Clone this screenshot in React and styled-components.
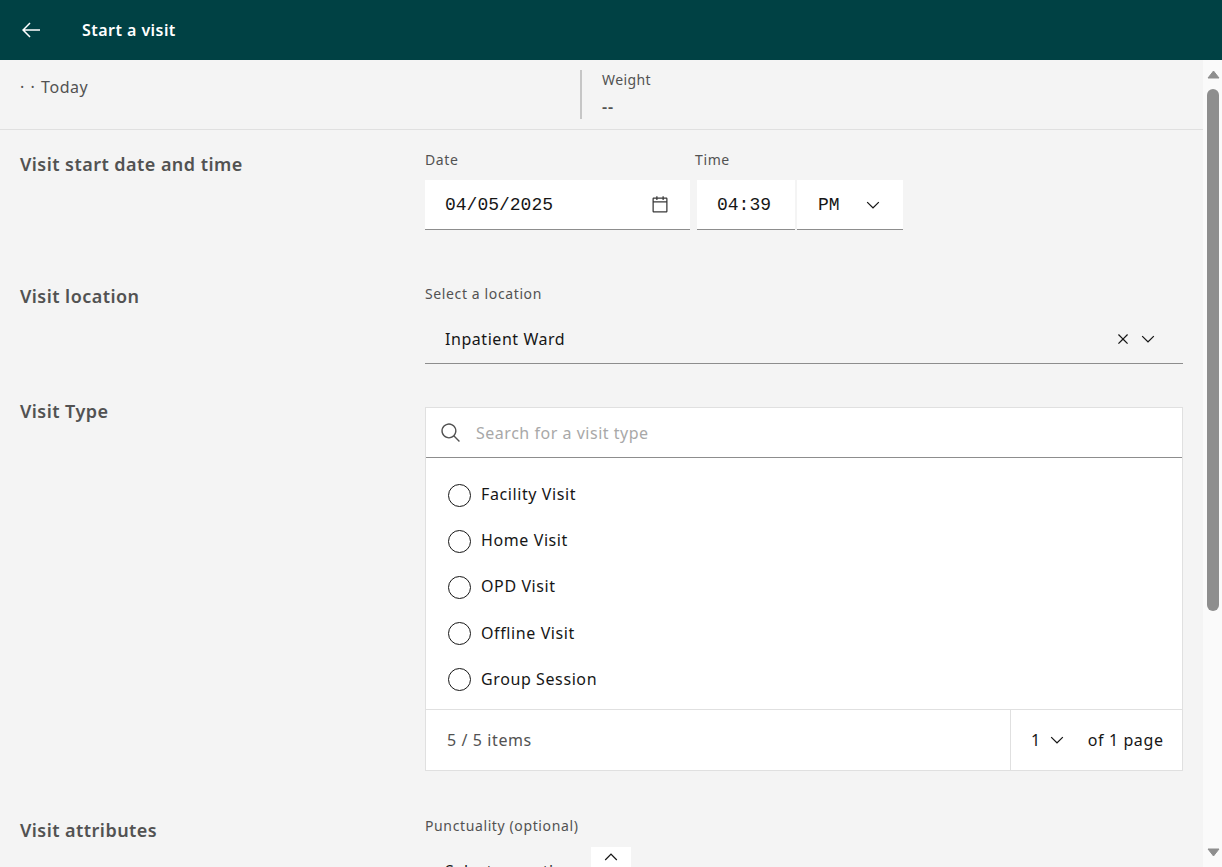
import React from 'react';
import styled, { createGlobalStyle } from 'styled-components';

const Global = createGlobalStyle`
  html, body { margin: 0; padding: 0; height: 100%; overflow: hidden; }
  body { font-family: "Noto Sans", Roboto, sans-serif; background: #fafafa; color: #161616; }
  * { box-sizing: border-box; }
`;

const Page = styled.div`
  width: 1222px; height: 867px; display: flex; flex-direction: column; overflow: hidden;
`;
const Header = styled.header`
  height: 60px; flex: none; background: #004144; color: #fff; display: flex; align-items: center; padding-left: 19px;
`;
const HeaderTitle = styled.h1`
  margin: 0 0 0 39px; font-size: 16px; line-height: 20px; font-weight: 600; letter-spacing: .45px;
`;
const Body = styled.div`
  flex: 1; min-height: 0; display: flex;
`;
const Main = styled.main`
  width: 1203px; flex: none; background: #f4f4f4; overflow: hidden;
`;
const Summary = styled.div`
  height: 70px; padding-top: 10px; border-bottom: 1px solid #e0e0e0; display: flex; align-items: flex-start;
`;
const SummaryDate = styled.div`
  width: 580px; padding: 6px 0 0 20px; font-size: 16px; line-height: 22px; color: #525252; letter-spacing: .55px; word-spacing: 1px;
`;
const Vitals = styled.div`
  height: 49px; border-left: 2px solid #c6c6c6; padding-left: 20px;
`;
const VitalLabel = styled.div`
  font-size: 14px; line-height: 20px; color: #525252; letter-spacing: .4px;
`;
const VitalValue = styled.div`
  margin-top: 7px; font-size: 16px; line-height: 20px; color: #525252; font-weight: 600; letter-spacing: 1px;
`;
const Section = styled.section`
  display: grid; grid-template-columns: 405px 758px; padding-left: 20px; margin-top: ${p => p.$top}px;
`;
const Heading = styled.h2`
  margin: ${p => p.$offset || 0}px 0 0; font-size: 18px; line-height: 24px; font-weight: 600; color: #525252; letter-spacing: .45px;
`;
const Field = styled.div`
  margin-top: ${p => p.$offset || 0}px; position: relative; min-width: 0;
`;
const Label = styled.label`
  display: block; font-size: 14px; line-height: 20px; color: #525252; letter-spacing: .62px; margin-bottom: 10px;
`;
const Row = styled.div`
  display: flex;
`;
const Group = styled.div`
  margin-left: ${p => p.$left || 0}px;
`;
const Input = styled.div`
  width: ${p => p.$w}px; height: 50px; margin-left: ${p => p.$ml || 0}px; background: #fff; border-bottom: 1px solid #8d8d8d;
  display: flex; align-items: center; justify-content: space-between;
  padding: 1px ${p => p.$pr || 0}px 0 ${p => p.$pl || 20}px;
  font-family: "Liberation Mono", monospace; font-size: 18px; color: #161616;
`;
const Select = styled.div`
  height: 50px; border-bottom: 1px solid #8d8d8d; display: flex; align-items: center; padding: 0 25px 0 20px;
  font-size: 16px; color: #161616; letter-spacing: .55px;
`;
const SelectText = styled.span`
  flex: 1;
`;
const IconGap = styled.span`
  display: inline-flex; margin-left: ${p => p.$left || 0}px; color: ${p => p.$color || '#161616'};
`;
const PickerBox = styled.div`
  height: 364px; background: #fff; border: 1px solid #e0e0e0; display: flex; flex-direction: column;
`;
const SearchRow = styled.div`
  height: 50px; flex: none; border-bottom: 1px solid #8d8d8d; display: flex; align-items: center; padding-left: 14px;
`;
const Placeholder = styled.span`
  margin-left: 14px; font-size: 16px; color: #a8a8a8; letter-spacing: .52px;
`;
const Options = styled.div`
  flex: 1; display: flex; flex-direction: column; padding: 14px 0 0 22px;
`;
const Option = styled.div`
  height: 46.2px; display: flex; align-items: center; font-size: 16px; color: #161616; letter-spacing: .6px;
`;
const OptionText = styled.span`
  margin-top: -2px;
`;
const Radio = styled.span`
  width: 23px; height: 23px; border-radius: 50%; border: 1.5px solid #161616; margin-right: 10px; flex: none;
`;
const Footer = styled.div`
  height: 61px; flex: none; border-top: 1px solid #e0e0e0; display: flex; align-items: center; font-size: 16px; padding-left: 21px; color: #525252; letter-spacing: .6px;
`;
const Count = styled.span`
  flex: 1;
`;
const Pager = styled.div`
  height: 100%; width: 172px; border-left: 1px solid #e0e0e0; display: flex; align-items: center; padding-left: 20px; color: #161616;
`;
const PageText = styled.span`
  margin-left: 21px;
`;
const CaretBox = styled.div`
  position: absolute; left: 166px; top: 31px; width: 40px; height: 40px; background: #fff;
  display: flex; justify-content: center;
`;
const Scrollbar = styled.div`
  flex: 1; background: #fafafa; display: flex; flex-direction: column; align-items: center; padding: 10px 0 10px 1px;
`;
const Thumb = styled.div`
  width: 12px; height: 522px; margin-top: 10px; margin-bottom: auto; background: #8e8e8e; border-radius: 6px;
`;

const Svg = ({ size = 20, d, fill = 'currentColor' }) => (
  <svg width={size} height={size} viewBox="0 0 32 32" fill={fill} aria-hidden="true"><path d={d} /></svg>
);
const icons = {
  arrow: 'M14 26l1.41-1.41L7.83 17H28v-2H7.83l7.58-7.59L14 6 4 16 14 26z',
  calendar: 'M26,4h-4V2h-2v2h-8V2h-2v2H6C4.9,4,4,4.9,4,6v20c0,1.1,0.9,2,2,2h20c1.1,0,2-0.9,2-2V6C28,4.9,27.1,4,26,4z M26,26H6V12h20V26z M26,10H6V6h4v2h2V6h8v2h2V6h4V10z',
  down: 'M16 22L6 12l1.4-1.4 8.6 8.6 8.6-8.6L26 12z',
  up: 'M16 10L26 20 24.6 21.4 16 12.8 7.4 21.4 6 20z',
  close: 'M24 9.4L22.6 8 16 14.6 9.4 8 8 9.4 14.6 16 8 22.6 9.4 24 16 17.4 22.6 24 24 22.6 17.4 16 24 9.4z',
  search: 'M29 27.5859l-7.5521-7.5521a11.0177 11.0177 0 10-1.4141 1.4141L27.5859 29zM4 13a9 9 0 119 9A9.01 9.01 0 014 13z',
};
const Tri = ({ up }) => (
  <svg width="13" height="9" viewBox="0 0 13 9" aria-hidden="true">
    <path d={up ? 'M6.5 1L12 8H1z' : 'M1 1h11L6.5 8z'} fill="#8e8e8e" stroke="#8e8e8e" strokeLinejoin="round" />
  </svg>
);

const visitTypes = ['Facility Visit', 'Home Visit', 'OPD Visit', 'Offline Visit', 'Group Session'];

export default function App() {
  return (
    <Page>
      <Global />
      <Header>
        <Svg size={24} d={icons.arrow} />
        <HeaderTitle>Start a visit</HeaderTitle>
      </Header>
      <Body>
        <Main>
          <Summary>
            <SummaryDate>· · Today</SummaryDate>
            <Vitals>
              <VitalLabel>Weight</VitalLabel>
              <VitalValue>--</VitalValue>
            </Vitals>
          </Summary>

          <Section $top={20}>
            <Heading $offset={2}>Visit start date and time</Heading>
            <Field>
              <Row>
                <Group>
                  <Label>Date</Label>
                  <Input $w={265} $pr={20}>
                    04/05/2025
                    <Svg size={20} d={icons.calendar} fill="#393939" />
                  </Input>
                </Group>
                <Group $left={5}>
                  <Label>Time</Label>
                  <Row>
                    <Input $w={98} $ml={2}>04:39</Input>
                    <Input $w={106} $ml={2} $pr={20} $pl={21}>
                      PM
                      <Svg size={20} d={icons.down} />
                    </Input>
                  </Row>
                </Group>
              </Row>
            </Field>
          </Section>

          <Section $top={54}>
            <Heading>Visit location</Heading>
            <Field>
              <Label>Select a location</Label>
              <Select>
                <SelectText>Inpatient Ward</SelectText>
                <Svg size={20} d={icons.close} />
                <IconGap $left={5}><Svg size={20} d={icons.down} /></IconGap>
              </Select>
            </Field>
          </Section>

          <Section $top={35}>
            <Heading>Visit Type</Heading>
            <Field $offset={8}>
              <PickerBox>
                <SearchRow>
                  <IconGap $color="#525252"><Svg size={22} d={icons.search} /></IconGap>
                  <Placeholder>Search for a visit type</Placeholder>
                </SearchRow>
                <Options>
                  {visitTypes.map(v => (
                    <Option key={v}><Radio /><OptionText>{v}</OptionText></Option>
                  ))}
                </Options>
                <Footer>
                  <Count>5 / 5 items</Count>
                  <Pager>
                    1
                    <IconGap $left={6}><Svg size={20} d={icons.down} /></IconGap>
                    <PageText>of 1 page</PageText>
                  </Pager>
                </Footer>
              </PickerBox>
            </Field>
          </Section>

          <Section $top={45}>
            <Heading $offset={2}>Visit attributes</Heading>
            <Field>
              <Label>Punctuality (optional)</Label>
              <Select>Select an option</Select>
              <CaretBox><Svg size={20} d={icons.up} /></CaretBox>
            </Field>
          </Section>
        </Main>
        <Scrollbar>
          <Tri up />
          <Thumb />
          <Tri />
        </Scrollbar>
      </Body>
    </Page>
  );
}
